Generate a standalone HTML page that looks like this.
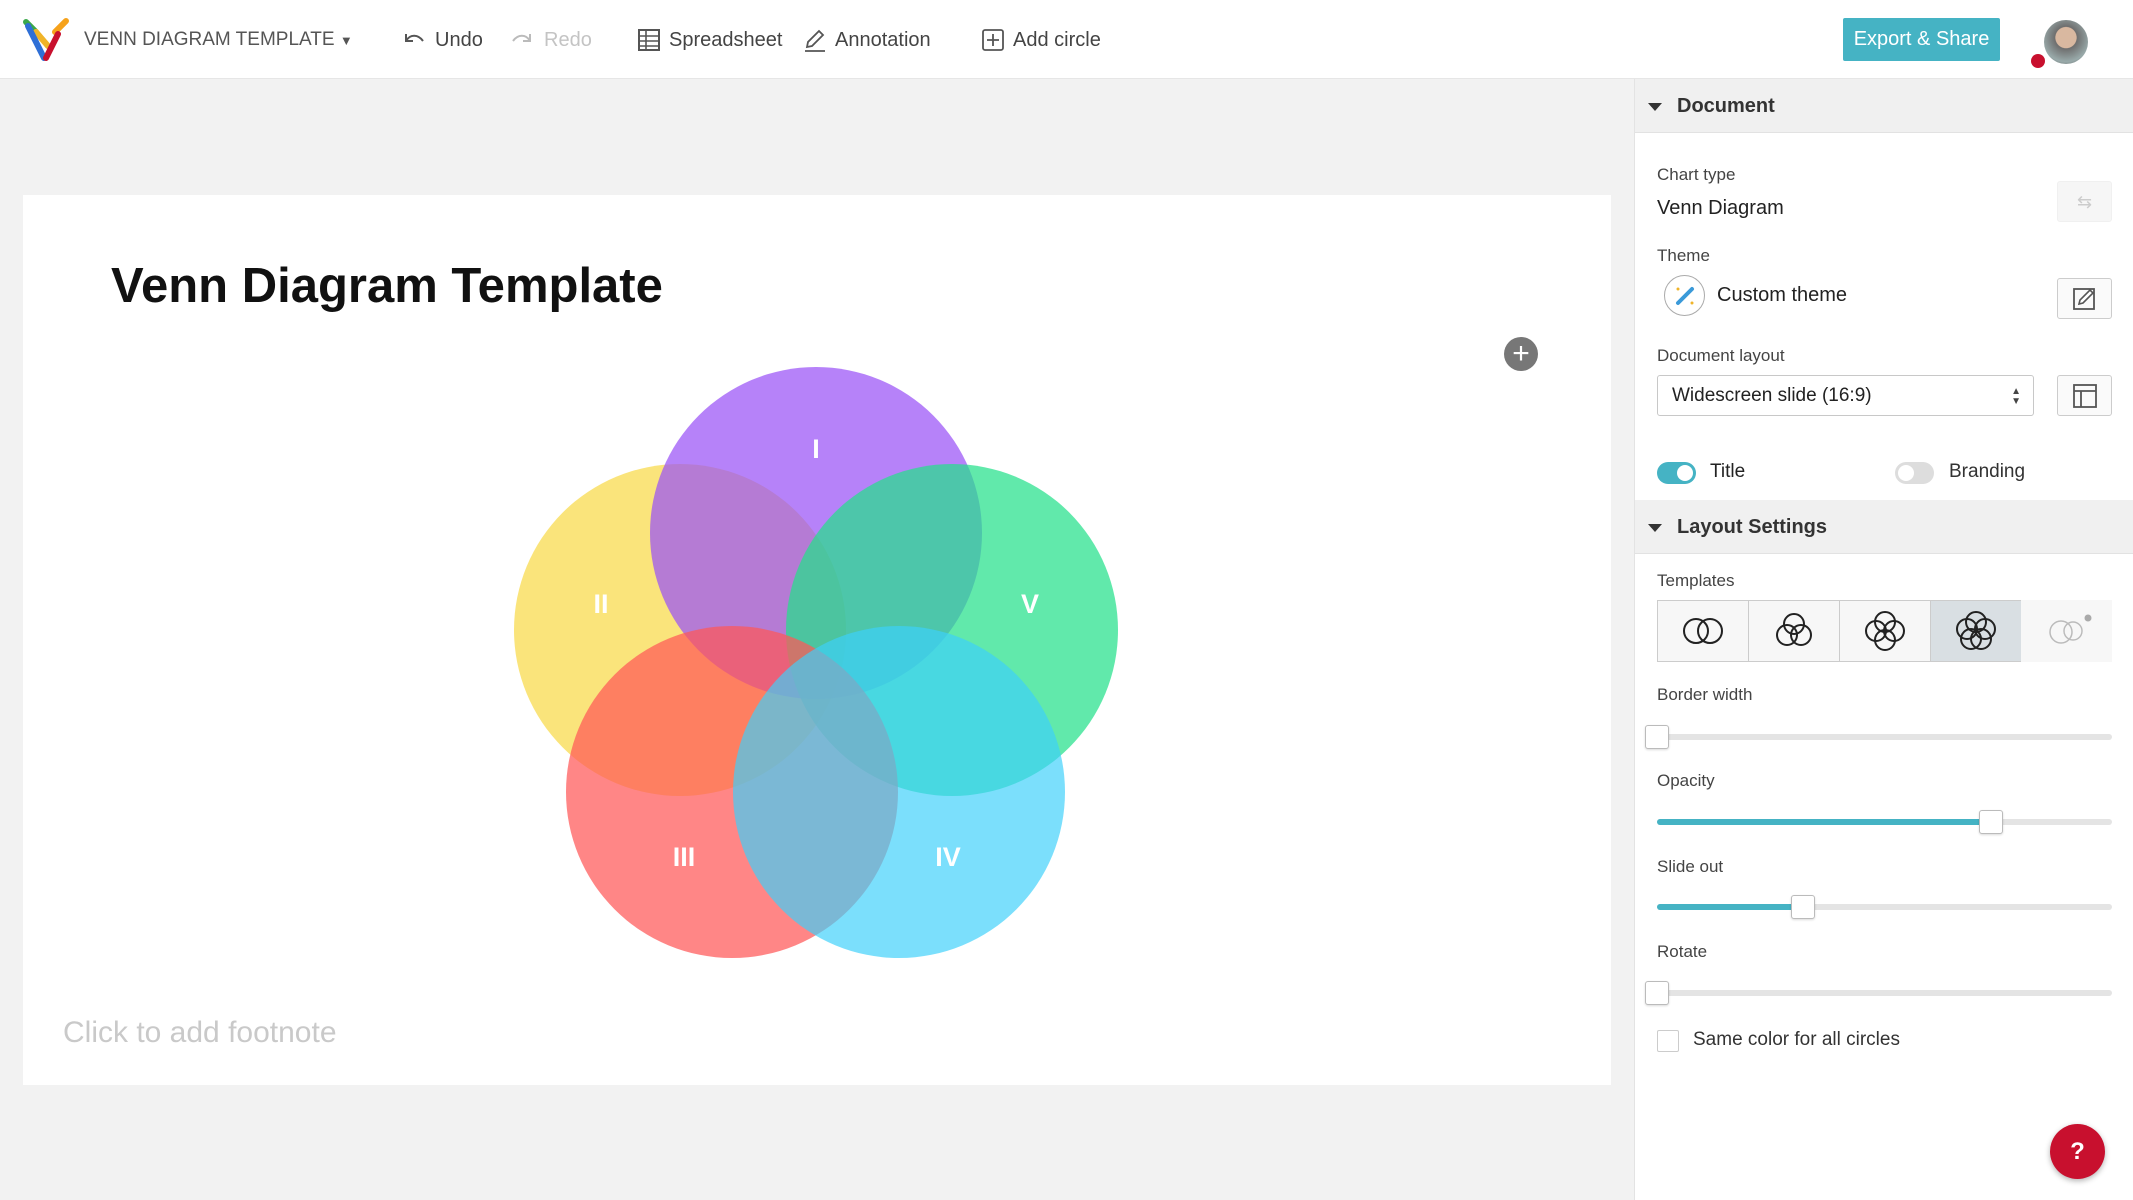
<!DOCTYPE html>
<html><head><meta charset="utf-8">
<style>
*{box-sizing:border-box;margin:0;padding:0}
body{width:2133px;height:1200px;overflow:hidden;background:#f2f2f2;font-family:"Liberation Sans",sans-serif;position:relative;color:#333}
.abs{position:absolute}
.top{left:0;top:0;width:2133px;height:79px;background:#fff;border-bottom:1px solid #e6e6e6}
.tb{position:absolute;top:28px;font-size:20px;color:#444;line-height:24px}
.side{left:1634px;top:79px;width:499px;height:1121px;background:#fff;border-left:1px solid #e3e3e3}
.hdr{position:absolute;left:0;width:499px;height:54px;background:#f0f0f0;border-bottom:1px solid #e2e2e2;font-weight:bold;font-size:20px;color:#333;line-height:54px;padding-left:42px}
.hdr:before{content:"";position:absolute;left:13px;top:24px;border-left:7px solid transparent;border-right:7px solid transparent;border-top:8px solid #333}
.lbl{position:absolute;font-size:17px;color:#444}
.val{position:absolute;font-size:20px;color:#222}
.btn{position:absolute;width:55px;height:41px;border:1px solid #ccc;border-radius:3px;background:#fafafa}
.track{position:absolute;left:1657px;width:455px;height:6px;background:#e4e4e4;border-radius:3px}
.fill{position:absolute;left:0;top:0;height:6px;background:#45b3c4;border-radius:3px}
.thumb{position:absolute;top:-9px;width:24px;height:24px;background:#fff;border:1px solid #bbb;border-radius:3px;box-shadow:0 1px 2px rgba(0,0,0,.15)}
</style></head><body>
<div class="abs top"></div>
<svg class="abs" style="left:22px;top:16px" width="50" height="46" viewBox="0 0 50 46">
<path d="M4 6 L14 16" stroke="#3aa84a" stroke-width="6" stroke-linecap="round"/>
<path d="M14 16 L26 30" stroke="#f0b429" stroke-width="6" stroke-linecap="round"/>
<path d="M44 5 L33 16" stroke="#f6a21b" stroke-width="6" stroke-linecap="round"/>
<path d="M6 10 L22 42" stroke="#2f6fd6" stroke-width="6" stroke-linecap="round"/>
<path d="M36 18 L24 42" stroke="#c8102e" stroke-width="6" stroke-linecap="round"/>
</svg>
<div class="tb" style="left:84px;color:#555;font-size:19px">VENN DIAGRAM TEMPLATE <span style="font-size:13px">▼</span></div>
<svg class="abs" style="left:402px;top:30px" width="24" height="20" viewBox="0 0 24 20"><path d="M4 4 V11 H11 M4 11 C8 4 16 4 21 11" fill="none" stroke="#555" stroke-width="2"/></svg>
<div class="tb" style="left:435px">Undo</div>
<svg class="abs" style="left:510px;top:30px" width="24" height="20" viewBox="0 0 24 20"><path d="M20 4 V11 H13 M20 11 C16 4 8 4 3 11" fill="none" stroke="#bbb" stroke-width="2"/></svg>
<div class="tb" style="left:544px;color:#c4c4c4">Redo</div>
<svg class="abs" style="left:638px;top:29px" width="22" height="22" viewBox="0 0 22 22"><rect x="1" y="1" width="20" height="20" fill="none" stroke="#555" stroke-width="2"/><path d="M1 7H21M1 12H21M1 17H21M8 1V21" stroke="#555" stroke-width="1.6"/></svg>
<div class="tb" style="left:669px">Spreadsheet</div>
<svg class="abs" style="left:803px;top:28px" width="24" height="24" viewBox="0 0 24 24"><path d="M4 19 L5 14 L16 3 L20 7 L9 18 Z" fill="none" stroke="#555" stroke-width="1.8"/><path d="M2 23H22" stroke="#555" stroke-width="1.8"/></svg>
<div class="tb" style="left:835px">Annotation</div>
<svg class="abs" style="left:982px;top:29px" width="22" height="22" viewBox="0 0 22 22"><rect x="1" y="1" width="20" height="20" rx="2" fill="none" stroke="#555" stroke-width="1.8"/><path d="M11 5V17M5 11H17" stroke="#555" stroke-width="1.8"/></svg>
<div class="tb" style="left:1013px">Add circle</div>
<div class="abs" style="left:1843px;top:18px;width:157px;height:43px;background:#45b3c4;border-radius:2px;color:#fff;font-size:20px;line-height:43px;text-align:center">Export &amp; Share</div>
<div class="abs" style="left:2044px;top:20px;width:44px;height:44px;border-radius:50%;background:radial-gradient(circle at 50% 40%,#d9b8a0 0 30%,#6e6e6e 32%,#9aa 70%,#555)"></div>
<div class="abs" style="left:2031px;top:54px;width:14px;height:14px;border-radius:50%;background:#c8102e"></div>

<div class="abs" style="left:23px;top:195px;width:1588px;height:890px;background:#fff"></div>
<div class="abs" style="left:111px;top:258px;font-size:49px;font-weight:bold;color:#111">Venn Diagram Template</div>
<div class="abs" style="left:1504px;top:337px;width:34px;height:34px;border-radius:50%;background:#777;color:#fff;font-size:30px;line-height:33px;text-align:center">+</div>
<svg class="abs" style="left:0;top:0" width="1620" height="1100">
<circle cx="680" cy="630" r="166" fill="#f9dd5a" opacity="0.8"/>
<circle cx="816" cy="533" r="166" fill="#9a52f6" opacity="0.72"/>
<circle cx="952" cy="630" r="166" fill="#24e08a" opacity="0.72"/>
<circle cx="732" cy="792" r="166" fill="#ff5757" opacity="0.72"/>
<circle cx="899" cy="792" r="166" fill="#3dd0fb" opacity="0.68"/>
<g fill="#fff" font-family="Liberation Sans" font-weight="bold" font-size="27" text-anchor="middle">
<text x="816" y="458">I</text><text x="601" y="613">II</text><text x="1030" y="613">V</text><text x="684" y="866">III</text><text x="948" y="866">IV</text>
</g>
</svg>
<div class="abs" style="left:63px;top:1016px;font-size:30px;color:#c9c9c9">Click to add footnote</div>

<div class="abs side">
<div class="hdr" style="top:0">Document</div>
<div class="hdr" style="top:421px">Layout Settings</div>
</div>
<div class="lbl" style="left:1657px;top:165px">Chart type</div>
<div class="val" style="left:1657px;top:197px">Venn Diagram</div>
<div class="btn" style="left:2057px;top:181px;border-color:#f0f0f0;background:#f6f6f6;color:#ccc;font-size:18px;text-align:center;line-height:40px">⇆</div>
<div class="lbl" style="left:1657px;top:246px">Theme</div>
<div class="abs" style="left:1664px;top:275px;width:41px;height:41px;border:1.5px solid #aaa;border-radius:50%"></div>
<svg class="abs" style="left:1672px;top:283px" width="26" height="26" viewBox="0 0 26 26"><path d="M6 20 L20 6" stroke="#3a9ad9" stroke-width="4" stroke-linecap="round"/><circle cx="6" cy="6" r="1.5" fill="#f0b429"/><circle cx="20" cy="20" r="1.5" fill="#f0b429"/></svg>
<div class="val" style="left:1717px;top:284px">Custom theme</div>
<div class="btn" style="left:2057px;top:278px"><svg width="53" height="39" viewBox="0 0 53 39"><rect x="16" y="10" width="20" height="20" fill="none" stroke="#555" stroke-width="1.8"/><path d="M21 25 L22 21 L32 11 L35 14 L25 24 Z" fill="#fff" stroke="#555" stroke-width="1.6"/></svg></div>
<div class="lbl" style="left:1657px;top:346px">Document layout</div>
<div class="abs" style="left:1657px;top:375px;width:377px;height:41px;border:1px solid #c8c8c8;border-radius:3px;background:#fff;font-size:19px;line-height:39px;padding-left:14px;color:#222">Widescreen slide (16:9)<span style="position:absolute;right:12px;font-size:10px;line-height:10px;top:11px;color:#444">▲<br>▼</span></div>
<div class="btn" style="left:2057px;top:375px"><svg width="53" height="39" viewBox="0 0 53 39"><rect x="16" y="9" width="22" height="22" fill="none" stroke="#555" stroke-width="1.8"/><path d="M16 15H38M23 15V31" stroke="#555" stroke-width="1.8"/></svg></div>
<div class="abs" style="left:1657px;top:462px;width:39px;height:22px;border-radius:11px;background:#45b3c4"><div style="position:absolute;right:3px;top:3px;width:16px;height:16px;border-radius:50%;background:#fff"></div></div>
<div class="val" style="left:1710px;top:461px;font-size:19px">Title</div>
<div class="abs" style="left:1895px;top:462px;width:39px;height:22px;border-radius:11px;background:#ddd"><div style="position:absolute;left:3px;top:3px;width:16px;height:16px;border-radius:50%;background:#fff"></div></div>
<div class="val" style="left:1949px;top:461px;font-size:19px;color:#333">Branding</div>

<div class="lbl" style="left:1657px;top:571px">Templates</div>
<div class="abs" style="left:1657px;top:600px;width:364px;height:62px;border:1px solid #ccc;background:#f7f7f7;display:flex">
<div style="width:91px;border-right:1px solid #ccc"><svg width="90" height="60" viewBox="0 0 90 60"><circle cx="38" cy="30" r="12" fill="none" stroke="#222" stroke-width="2"/><circle cx="52" cy="30" r="12" fill="none" stroke="#222" stroke-width="2"/></svg></div>
<div style="width:91px;border-right:1px solid #ccc"><svg width="90" height="60" viewBox="0 0 90 60"><circle cx="45" cy="23" r="10" fill="none" stroke="#222" stroke-width="2"/><circle cx="38" cy="34" r="10" fill="none" stroke="#222" stroke-width="2"/><circle cx="52" cy="34" r="10" fill="none" stroke="#222" stroke-width="2"/></svg></div>
<div style="width:91px;border-right:1px solid #ccc"><svg width="90" height="60" viewBox="0 0 90 60"><g fill="none" stroke="#222" stroke-width="2"><circle cx="45" cy="21" r="10"/><circle cx="36" cy="30" r="10"/><circle cx="54" cy="30" r="10"/><circle cx="45" cy="39" r="10"/></g></svg></div>
<div style="width:91px;background:#d9dfe3"><svg width="90" height="60" viewBox="0 0 90 60"><g fill="none" stroke="#222" stroke-width="2"><circle cx="45" cy="21" r="10"/><circle cx="36" cy="28" r="10"/><circle cx="54" cy="28" r="10"/><circle cx="40" cy="38" r="10"/><circle cx="50" cy="38" r="10"/></g></svg></div>
</div>
<svg class="abs" style="left:2021px;top:600px" width="91" height="62" viewBox="0 0 91 62"><rect width="91" height="62" fill="#f7f7f7"/><g fill="none" stroke="#bbb" stroke-width="1.5"><circle cx="40" cy="32" r="11"/><circle cx="52" cy="31" r="9"/></g><circle cx="67" cy="18" r="3.5" fill="#aaa"/></svg>

<div class="lbl" style="left:1657px;top:685px">Border width</div>
<div class="track" style="top:734px"><div class="thumb" style="left:-12px"></div></div>
<div class="lbl" style="left:1657px;top:771px">Opacity</div>
<div class="track" style="top:819px"><div class="fill" style="width:333px"></div><div class="thumb" style="left:322px"></div></div>
<div class="lbl" style="left:1657px;top:857px">Slide out</div>
<div class="track" style="top:904px"><div class="fill" style="width:145px"></div><div class="thumb" style="left:134px"></div></div>
<div class="lbl" style="left:1657px;top:942px">Rotate</div>
<div class="track" style="top:990px"><div class="thumb" style="left:-12px"></div></div>
<div class="abs" style="left:1657px;top:1030px;width:22px;height:22px;border:1px solid #ccc;border-radius:2px"></div>
<div class="val" style="left:1693px;top:1029px;font-size:19px;color:#333">Same color for all circles</div>
<div class="abs" style="left:2050px;top:1124px;width:55px;height:55px;border-radius:50%;background:#c8102e;color:#fff;font-weight:bold;font-size:24px;line-height:55px;text-align:center;box-shadow:0 2px 6px rgba(0,0,0,.3)">?</div>
</body></html>
